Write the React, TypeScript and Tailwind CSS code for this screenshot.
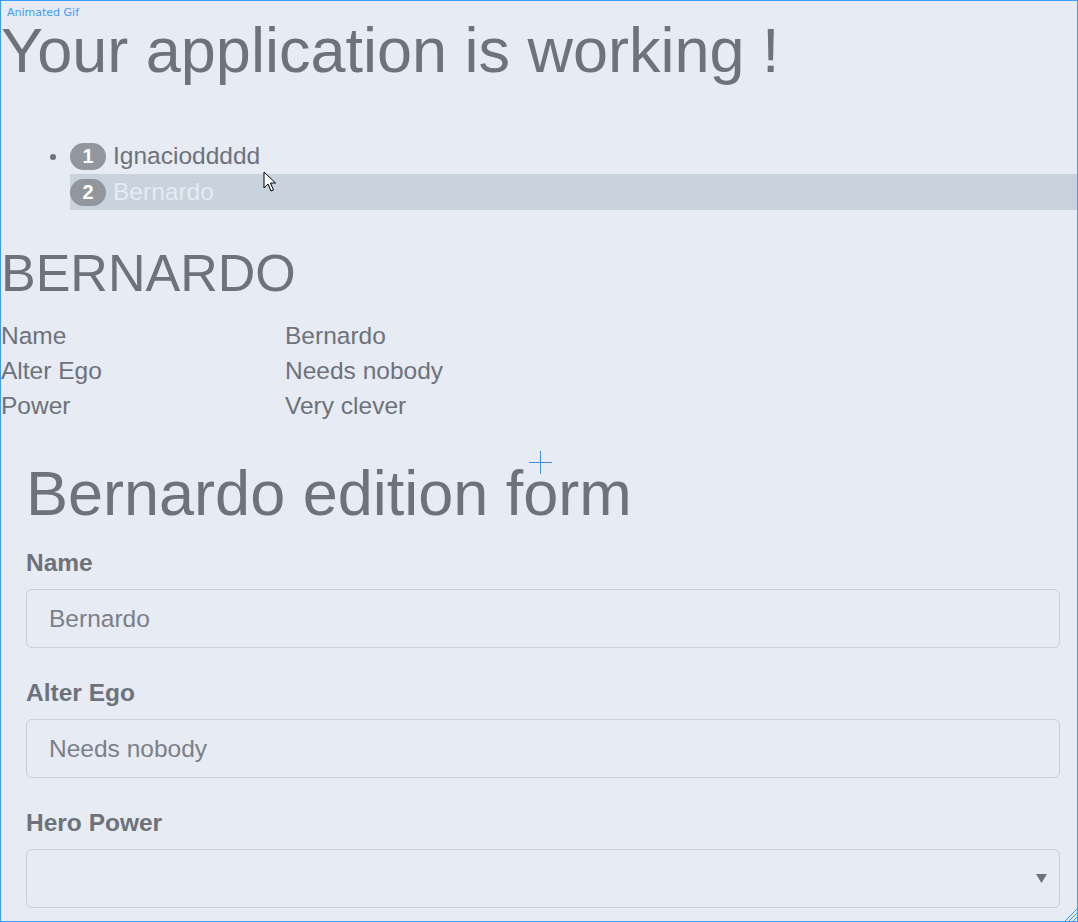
import React from "react";

const details = [
  ["Name", "Bernardo"],
  ["Alter Ego", "Needs nobody"],
  ["Power", "Very clever"],
];

function Badge({ n }: { n: number }) {
  return (
    <span className="inline-flex h-[27px] w-[36px] shrink-0 items-center justify-center rounded-full bg-[#92969d] text-[20px] font-bold text-white">
      {n}
    </span>
  );
}

function Field({ label, value, first }: { label: string; value: string; first?: boolean }) {
  return (
    <div>
      <label className={`block h-[30px] text-[24.5px] font-bold leading-[30px] ${first ? "mt-[18px]" : "mt-[30px]"}`}>
        {label}
      </label>
      <input
        readOnly
        value={value}
        className="mt-[11px] block h-[59px] w-full rounded-[6px] border border-[#c9ced8] bg-[#e7ebf4] px-[22px] text-[24.5px] text-[#7b7f87] outline-none"
      />
    </div>
  );
}

export default function App() {
  return (
    <div className="relative h-[922px] w-[1078px] overflow-hidden border border-[#3d9bff] bg-[#e6ebf4] font-['Liberation_Sans',Arial,sans-serif] text-[#6e727a]">
      {/* recorder label */}
      <span className="absolute left-[6px] top-[5px] font-['DejaVu_Sans',sans-serif] text-[11px] leading-[14px] text-[#3d9bff]">
        Animated Gif
      </span>

      <h1 className="mt-[18px] text-[63px] leading-[63px]">Your application is working !</h1>

      <ul className="mt-[56px] pl-[69px]">
        <li className="relative flex h-[36px] items-center">
          <span className="absolute left-[-20px] top-[16px] h-[6px] w-[6px] rounded-full bg-[#6e727a]" />
          <Badge n={1} />
          <span className="ml-[7px] text-[24.5px]">Ignacioddddd</span>
        </li>
        <li className="flex h-[36px] items-center bg-[#c9d3de]">
          <Badge n={2} />
          <span className="ml-[7px] text-[24.5px] text-[#e4ebf5]">Bernardo</span>
        </li>
      </ul>

      <h2 className="mt-[32px] text-[52px] leading-[62px]">BERNARDO</h2>

      <div className="mt-[15px]">
        {details.map(([k, v]) => (
          <div key={k} className="flex h-[35px] items-center text-[24.5px]">
            <span className="w-[284px]">{k}</span>
            <span>{v}</span>
          </div>
        ))}
      </div>

      <form className="ml-[25px] mr-[17px] mt-[32px]">
        <h2 className="text-[63px] leading-[74px]">Bernardo edition form</h2>
        <Field label="Name" value="Bernardo" first />
        <Field label="Alter Ego" value="Needs nobody" />
        <div>
          <label className="mt-[30px] block h-[30px] text-[24.5px] font-bold leading-[30px]">Hero Power</label>
          <div className="mt-[11px] flex h-[59px] items-center justify-end rounded-[6px] border border-[#c9ced8] bg-[#e7ebf4] pr-[12px]">
            <svg width="11" height="9" viewBox="0 0 11 9">
              <path d="M0 0 H11 L5.5 9 Z" fill="#6e727a" />
            </svg>
          </div>
        </div>
      </form>

      {/* crosshair cursor */}
      <svg className="absolute left-[528px] top-[450px]" width="23" height="23" viewBox="0 0 23 23">
        <path d="M0 11.5 H23 M11.5 0 V23" stroke="#3b8fe6" strokeWidth="1" />
      </svg>

      {/* arrow cursor */}
      <svg className="absolute left-[262px] top-[170px]" width="14" height="22" viewBox="0 0 14 22">
        <path d="M1 1 V17 L5 13 L8 20 L10.5 19 L7.5 12 L12.5 12 Z" fill="#fff" stroke="#000" strokeWidth="1" strokeLinejoin="round" />
      </svg>

      {/* resize grip */}
      <svg className="absolute bottom-0 right-0" width="15" height="15" viewBox="0 0 15 15">
        <path d="M15 3 L3 15 M15 7 L7 15 M15 11 L11 15" stroke="#3d9bff" strokeWidth="1" />
      </svg>
    </div>
  );
}
